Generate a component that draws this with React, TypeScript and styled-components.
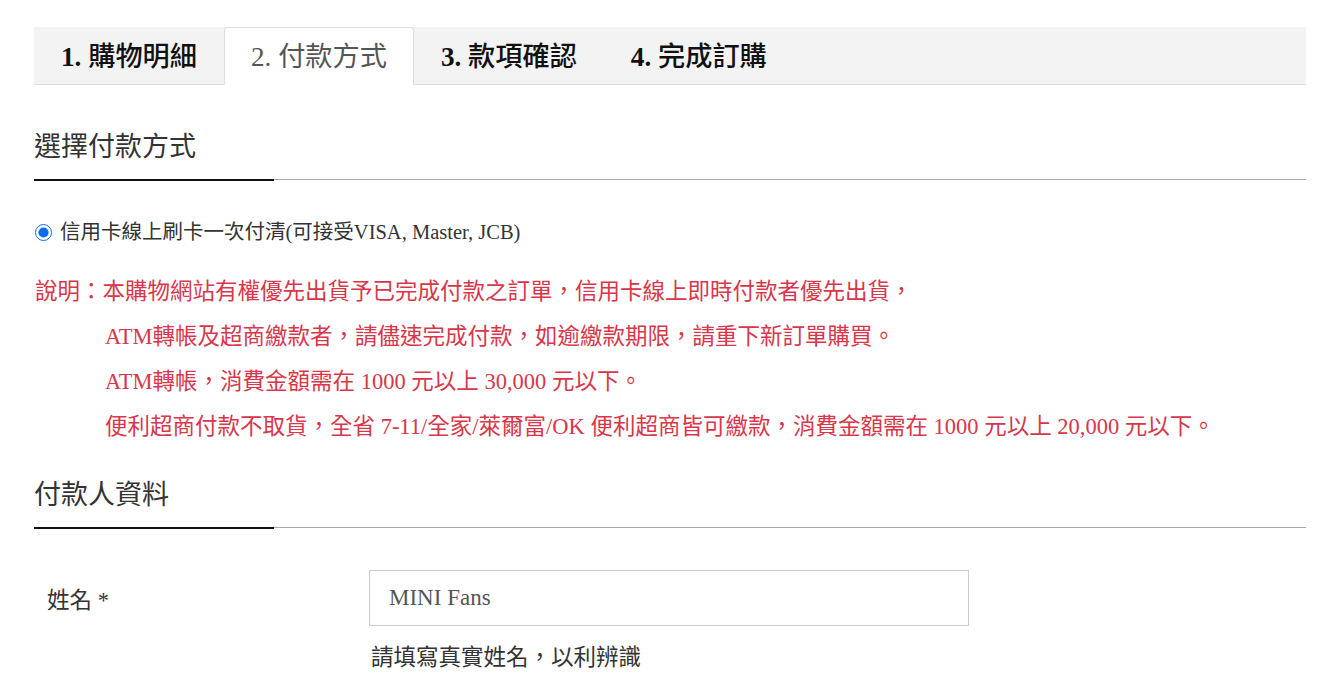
import * as React from "react";
import styled, { createGlobalStyle } from "styled-components";

const GlobalStyle = createGlobalStyle`
  body {
    margin: 0;
    background: #fff;
    font-family: "Liberation Serif", "Noto Sans CJK TC", serif;
    color: #333;
  }
`;

const Page = styled.div`
  padding: 27px 15px 0 34px;
  width: 1272px;
`;

const TabBar = styled.ul`
  display: flex;
  margin: 0;
  padding: 0;
  list-style: none;
  background: #f3f3f3;
  border-bottom: 1px solid #ddd;
`;

const Tab = styled.li<{ $active?: boolean }>`
  height: 58px;
  line-height: 58px;
  padding: 0 26px;
  font-size: 27.2px;
  font-weight: ${p => (p.$active ? 400 : 500)};
  color: ${p => (p.$active ? "#555" : "#111")};
  background: ${p => (p.$active ? "#fff" : "transparent")};
  border: 1px solid ${p => (p.$active ? "#ddd" : "transparent")};
  border-bottom-color: ${p => (p.$active ? "#fff" : "transparent")};
  border-radius: 4px 4px 0 0;
  margin-bottom: -1px;
  box-sizing: border-box;

  b {
    font-weight: ${p => (p.$active ? 400 : 700)};
  }
`;

const SectionTitle = styled.h2<{ $top: number }>`
  position: relative;
  margin: ${p => p.$top}px 0 0;
  padding-bottom: 12px;
  font-size: 27px;
  font-weight: 400;
  line-height: 40px;
  color: #333;
  border-bottom: 1px solid #aaa;

  &::after {
    content: "";
    position: absolute;
    left: 0;
    bottom: -2px;
    width: 240px;
    height: 2px;
    background: #111;
  }
`;

const RadioRow = styled.label`
  display: flex;
  align-items: center;
  margin-top: 39px;
  font-size: 20.5px;
  line-height: 27px;
  color: #333;
`;

const Radio = styled.input`
  width: 17px;
  height: 17px;
  margin: 0 8px 0 1px;
  accent-color: #0b6ef0;
`;

const Notes = styled.div`
  margin-top: 23px;
  color: #d9364a;
  font-size: 22.5px;
  line-height: 45px;
`;

const NoteLine = styled.div<{ $indent?: boolean }>`
  padding-left: ${p => (p.$indent ? "71px" : "1px")};
  white-space: nowrap;
`;

const FormRow = styled.div`
  display: grid;
  grid-template-columns: 335px 600px;
  margin-top: 42px;
`;

const FieldLabel = styled.div`
  padding-left: 13px;
  height: 56px;
  display: flex;
  align-items: center;
  font-size: 22.5px;
  color: #333;
`;

const FieldBox = styled.div`
  display: flex;
  flex-direction: column;
`;

const TextInput = styled.input`
  height: 56px;
  box-sizing: border-box;
  border: 1px solid #ccc;
  padding: 0 19px;
  font-family: "Liberation Serif", "Noto Sans CJK TC", serif;
  font-size: 23px;
  color: #555;
  outline: none;
`;

const Help = styled.div`
  margin-top: 15px;
  padding-left: 2px;
  font-size: 22.5px;
  line-height: 33px;
  color: #333;
`;

const tabs = [
  { num: "1.", label: "購物明細" },
  { num: "2.", label: "付款方式", active: true },
  { num: "3.", label: "款項確認" },
  { num: "4.", label: "完成訂購" }
];

export default function App() {
  return (
    <Page>
      <GlobalStyle />
      <TabBar>
        {tabs.map(t => (
          <Tab key={t.num} $active={t.active}>
            <b>{t.num}</b> {t.label}
          </Tab>
        ))}
      </TabBar>

      <SectionTitle $top={42}>選擇付款方式</SectionTitle>
      <RadioRow>
        <Radio type="radio" name="pay" defaultChecked />
        信用卡線上刷卡一次付清(可接受VISA, Master, JCB)
      </RadioRow>

      <Notes>
        <NoteLine>
          說明：本購物網站有權優先出貨予已完成付款之訂單，信用卡線上即時付款者優先出貨，
        </NoteLine>
        <NoteLine $indent>
          ATM轉帳及超商繳款者，請儘速完成付款，如逾繳款期限，請重下新訂單購買。
        </NoteLine>
        <NoteLine $indent>ATM轉帳，消費金額需在 1000 元以上 30,000 元以下。</NoteLine>
        <NoteLine $indent>
          便利超商付款不取貨，全省 7-11/全家/萊爾富/OK 便利超商皆可繳款，消費金額需在 1000 元以上 20,000 元以下。
        </NoteLine>
      </Notes>

      <SectionTitle $top={26}>付款人資料</SectionTitle>
      <FormRow>
        <FieldLabel>姓名 *</FieldLabel>
        <FieldBox>
          <TextInput defaultValue="MINI Fans" />
          <Help>請填寫真實姓名，以利辨識</Help>
        </FieldBox>
      </FormRow>
    </Page>
  );
}
